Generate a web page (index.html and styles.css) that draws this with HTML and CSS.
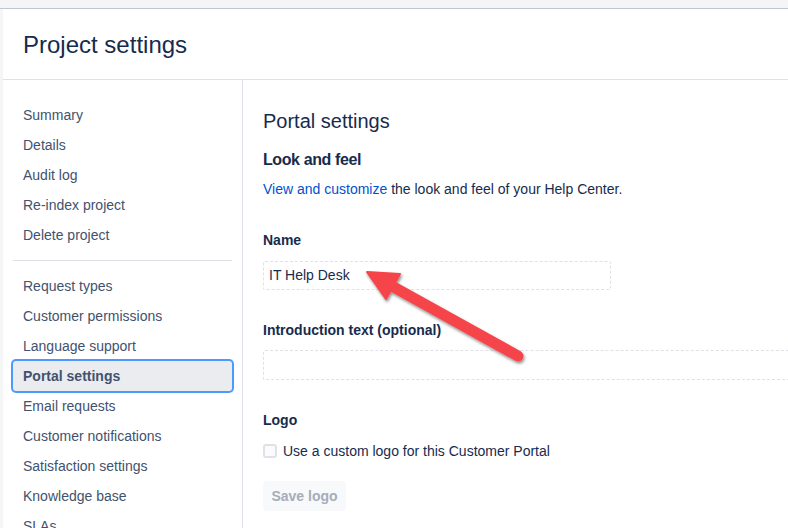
FILE: index.html
```html
<!DOCTYPE html>
<html lang="en">
<head>
    <meta charset="UTF-8">
    <meta name="viewport" content="width=device-width, initial-scale=1.0">
    <title>Project settings - Portal settings</title>
    <link rel="stylesheet" href="styles.css">
</head>
<body>
    <div class="topbar"></div>
    <div class="app">
        <header class="page-header">
            <h1>Project settings</h1>
        </header>
        <div class="layout">
            <nav class="sidebar">
                <ul class="nav-group">
                    <li class="nav-item">Summary</li>
                    <li class="nav-item">Details</li>
                    <li class="nav-item">Audit log</li>
                    <li class="nav-item">Re-index project</li>
                    <li class="nav-item">Delete project</li>
                </ul>
                <div class="nav-divider"></div>
                <ul class="nav-group">
                    <li class="nav-item">Request types</li>
                    <li class="nav-item">Customer permissions</li>
                    <li class="nav-item">Language support</li>
                    <li class="nav-item selected">Portal settings</li>
                    <li class="nav-item">Email requests</li>
                    <li class="nav-item">Customer notifications</li>
                    <li class="nav-item">Satisfaction settings</li>
                    <li class="nav-item">Knowledge base</li>
                    <li class="nav-item">SLAs</li>
                </ul>
            </nav>

            <main class="main">
                <h2>Portal settings</h2>
                <h3>Look and feel</h3>
                <p class="desc"><a href="#">View and customize</a> the look and feel of your Help Center.</p>

                <label class="field-label">Name</label>
                <div class="inline-input name-input">IT Help Desk</div>

                <label class="field-label">Introduction text (optional)</label>
                <div class="inline-input intro-input"></div>

                <label class="field-label">Logo</label>
                <div class="check-row">
                    <span class="checkbox"></span>
                    <span>Use a custom logo for this Customer Portal</span>
                </div>
                <button class="btn-disabled" disabled>Save logo</button>

                <!-- annotation arrow drawn over the form -->
                <svg class="arrow" width="180" height="115" viewBox="0 0 180 115">
                    <defs>
                        <filter id="shadow" x="-20%" y="-20%" width="140%" height="150%">
                            <feDropShadow dx="1" dy="2" stdDeviation="1.6" flood-color="#000" flood-opacity="0.45"/>
                        </filter>
                    </defs>
                    <g filter="url(#shadow)" fill="#f5454b" stroke="#f5454b">
                        <line x1="35" y1="30" x2="163" y2="101" stroke-width="11" stroke-linecap="round"/>
                        <polygon points="12,17 45,19 31,44" stroke-width="2" stroke-linejoin="round"/>
                    </g>
                </svg>
            </main>
        </div>
    </div>
</body>
</html>
```

FILE: styles.css
```css
body {
    margin: 0;
    font-family: "Liberation Sans", Arial, sans-serif;
    font-size: 14px;
    color: #172b4d;
    background-color: #fff;
    overflow: hidden;
    height: 528px;
}
.topbar {
    height: 8px;
    background-color: #f4f5f7;
    border-bottom: 1px solid #c1c7d0;
}
.app {
    border-left: 3px solid #f4f5f7;
    height: 519px;
    overflow: hidden;
}
.page-header {
    height: 70px;
    display: flex;
    align-items: center;
    padding-left: 20px;
    border-bottom: 1px solid #dfe1e6;
}
.page-header h1 {
    margin: 0 0 0 0;
    font-size: 24px;
    font-weight: 500;
    color: #172b4d;
    position: relative;
    top: 1px;
}
.layout {
    display: flex;
    height: 448px;
}
/* left nav */
.sidebar {
    width: 239px;
    flex-shrink: 0;
    border-right: 1px solid #dfe1e6;
    padding-top: 20px;
    overflow: hidden;
}
.nav-group {
    list-style: none;
    margin: 0;
    padding: 0;
}
.nav-item {
    height: 30px;
    line-height: 30px;
    margin: 0 10px;
    padding-left: 10px;
    color: #42526e;
    border-radius: 3px;
}
.nav-item.selected {
    background-color: #ebecf0;
    box-shadow: 0 0 0 2px #4c9aff;
    font-weight: bold;
}
.nav-divider {
    height: 1px;
    background-color: #dfe1e6;
    margin: 10px 10px;
}
/* main content */
.main {
    position: relative;
    flex: 1;
    padding: 28px 0 0 20px;
    min-width: 0;
}
.main h2 {
    margin: 0;
    font-size: 20px;
    line-height: 26px;
    font-weight: 500;
}
.main h3 {
    margin: 16px 0 0;
    font-size: 16px;
    line-height: 20px;
    font-weight: bold;
    letter-spacing: -0.4px;
}
.desc {
    margin: 9px 0 0;
    line-height: 20px;
}
.desc a {
    color: #0052cc;
    text-decoration: none;
}
.field-label {
    display: block;
    margin-top: 31px;
    line-height: 20px;
    font-weight: bold;
    color: #172b4d;
}
.inline-input {
    box-sizing: border-box;
    border: 1px dashed #dfe1e6;
    border-radius: 2px;
    padding: 0 5px;
    line-height: 27px;
    height: 29px;
    margin-top: 11px;
}
.name-input {
    width: 348px;
}
/* runs off the right edge of the window */
.intro-input {
    height: 30px;
    margin-top: 10px;
    width: 100%;
    border-right: none;
    border-radius: 2px 0 0 2px;
}
.main .field-label:nth-of-type(2),
.main .field-label:nth-of-type(3) {
    margin-top: 30px;
}
.check-row {
    display: flex;
    align-items: center;
    gap: 6px;
    margin-top: 11px;
    line-height: 20px;
}
.checkbox {
    box-sizing: border-box;
    width: 14px;
    height: 14px;
    border: 2px solid #dfe1e6;
    border-radius: 3px;
    background-color: #fafbfc;
}
.btn-disabled {
    margin-top: 20px;
    width: 83px;
    height: 30px;
    border: none;
    border-radius: 3px;
    background-color: #f8f9fa;
    color: #a5adba;
    font-family: inherit;
    font-size: 14px;
    font-weight: bold;
}
.arrow {
    position: absolute;
    left: 112px;
    top: 175px;
    overflow: visible;
}
```
